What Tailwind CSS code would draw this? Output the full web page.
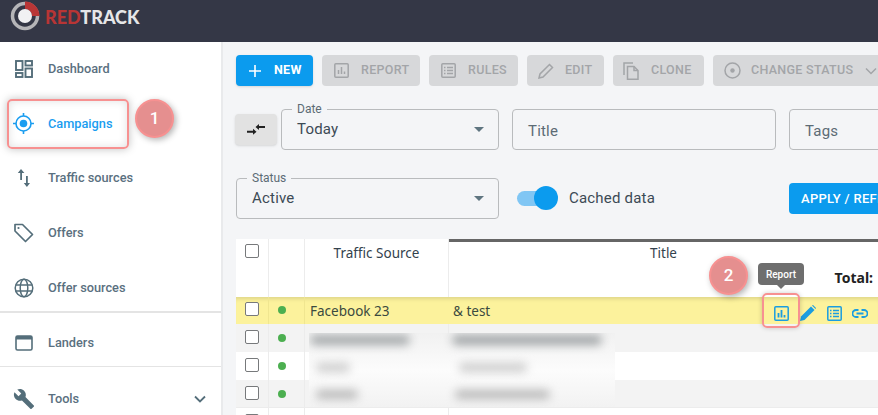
<!DOCTYPE html>
<html lang="en">
<head>
    <meta charset="UTF-8">
    <title>RedTrack Campaigns</title>
    <script src="https://cdn.jsdelivr.net/npm/@tailwindcss/browser@4"></script>
</head>
<body class="bg-[#f4f5f7] font-['Roboto',sans-serif]">
<div class="relative w-[878px] h-[415px] overflow-hidden flex flex-col">
    <!-- top bar -->
    <header class="h-[42px] shrink-0 bg-[#343746] flex items-center pl-[10px] overflow-hidden">
        <svg width="32" height="32" viewBox="0 0 32 32" class="-mt-[11px] shrink-0">
            <circle cx="15" cy="16" r="12.5" fill="none" stroke="#b5b5b8" stroke-width="3.5"/>
            <path d="M15 1.500A14.500 14.500 0 0 1 29.500 16H22A7 7 0 0 0 15 9Z" fill="#b93636"/>
            <circle cx="15" cy="16" r="7" fill="#f1f1f3"/>
        </svg>
        <div class="ml-[3px] -mt-[9px] font-['Lato',sans-serif] font-black text-[18px] leading-none"><span class="text-[#b83535]">RED</span><span class="text-[#e6e6e8]">TRACK</span></div>
    </header>

    <div class="flex flex-1 min-h-0">
        <!-- sidebar -->
        <aside class="w-[223px] shrink-0 bg-white border-r-2 border-[#e9eaec] text-[12.75px] font-medium text-[#5a7080]">
            <div class="h-[54px] pb-[1px] flex items-center pl-[15px] gap-[15px]">
                <svg width="18" height="18" viewBox="0 0 18 18" fill="none" stroke="#546e7a" stroke-width="1.900"><rect x="1" y="1" width="6.500" height="9"/><rect x="10.500" y="1" width="6.500" height="4.500"/><rect x="1" y="13" width="6.500" height="4"/><rect x="10.500" y="8.500" width="6.500" height="8.500"/></svg>
                <span>Dashboard</span>
            </div>
            <div class="h-[55px] flex items-center pl-[13px] gap-[14px] text-[#1a9df0]">
                <svg width="21" height="21" viewBox="0 0 21 21" fill="none" stroke="#1a9df0" stroke-width="1.600"><circle cx="10.500" cy="10.500" r="7.500"/><circle cx="10.500" cy="10.500" r="3.800" fill="#1a9df0" stroke="none"/><path d="M10.500 0v3M10.500 18v3M0 10.500h3M18 10.500h3"/></svg>
                <span>Campaigns</span>
            </div>
            <div class="h-[54px] flex items-center pl-[17px] gap-[17px]">
                <svg width="14" height="18" viewBox="0 0 14 18" fill="#546e7a"><path d="M4 0 7.400 4H5v7H3.200V4H.8ZM9 7h1.800v7H13l-3.100 4L6.800 14H9Z"/></svg>
                <span>Traffic sources</span>
            </div>
            <div class="h-[55px] flex items-center pl-[14px] gap-[14px]">
                <svg width="20" height="20" viewBox="0 0 20 20" fill="none" stroke="#546e7a" stroke-width="1.700"><path d="M1 1.500h7.500l10 10-7 7-10.500-10.500Z" stroke-linejoin="round"/><circle cx="4.500" cy="5" r="1.100" fill="#546e7a" stroke="none"/></svg>
                <span>Offers</span>
            </div>
            <div class="h-[53px] pt-[4px] flex items-center pl-[14px] gap-[14px] border-b-2 border-[#e4e4e4]">
                <svg width="20" height="20" viewBox="0 0 20 20" fill="none" stroke="#546e7a" stroke-width="1.500"><circle cx="10" cy="10" r="8.800"/><ellipse cx="10" cy="10" rx="3.800" ry="8.800"/><path d="M1.800 7h16.400M1.800 13h16.400"/></svg>
                <span>Offer sources</span>
            </div>
            <div class="h-[54px] pt-[6px] flex items-center pl-[15px] gap-[15px] border-b border-[#e4e4e4]">
                <svg width="18" height="16" viewBox="0 0 18 16" fill="none"><rect x="1" y="1" width="16" height="14" rx="1.500" stroke="#546e7a" stroke-width="1.600"/><rect x="1" y="1" width="16" height="3.500" fill="#546e7a"/></svg>
                <span>Landers</span>
            </div>
            <div class="h-[64px] flex items-center pl-[13px] gap-[13px] pr-[15px]">
                <svg width="22" height="22" viewBox="0 0 24 24" fill="#546e7a"><path d="M22.700 19 13.600 9.900c.9-2.300.4-5-1.500-6.900-2-2-5-2.400-7.400-1.300L9 6 6 9 1.600 4.700C.4 7.100.9 10.100 2.900 12.100c1.900 1.900 4.600 2.400 6.900 1.500l9.100 9.100c.4.400 1 .4 1.400 0l2.300-2.300c.5-.4.500-1.100.1-1.400Z"/></svg>
                <span>Tools</span>
                <svg width="12" height="8" viewBox="0 0 12 8" fill="none" stroke="#546e7a" stroke-width="1.800" class="ml-auto"><path d="m1 1.500 5 5 5-5"/></svg>
            </div>
        </aside>

        <!-- main -->
        <main class="flex-1 min-w-0 pl-[13px] pt-[13px] overflow-hidden">
            <!-- toolbar -->
            <div class="flex gap-[9px] h-[31px] w-[800px] text-[12.5px] font-medium tracking-[0.3px] text-[#a3a5a8]">
                <button class="w-[77px] shrink-0 flex items-center pl-[13px] gap-[13px] rounded bg-[#0b9bee] text-white font-bold shadow-sm">
                    <svg width="12" height="12" viewBox="0 0 12 12" stroke="#fff" stroke-width="1.600"><path d="M6 0v12M0 6h12"/></svg>NEW
                </button>
                <button class="w-[98px] shrink-0 flex items-center pl-[12px] gap-[12px] rounded bg-[#d7d8da]">
                    <svg width="15" height="15" viewBox="0 0 15 15" fill="none" stroke="#a3a5a8" stroke-width="1.500"><rect x=".8" y=".8" width="13.400" height="13.400" rx="1"/><path d="M4.500 11V7M7.500 11V4M10.500 11V8.500"/></svg>REPORT
                </button>
                <button class="w-[89px] shrink-0 flex items-center pl-[12px] gap-[12px] rounded bg-[#d7d8da]">
                    <svg width="15" height="15" viewBox="0 0 15 15" fill="none" stroke="#a3a5a8" stroke-width="1.500"><rect x=".8" y=".8" width="13.400" height="13.400" rx="1"/><path d="M3 4.500h1.500M6 4.500h6M3 7.500h1.500M6 7.500h6M3 10.500h1.500M6 10.500h6"/></svg>RULES
                </button>
                <button class="w-[77px] shrink-0 flex items-center pl-[11px] gap-[11px] rounded bg-[#d7d8da]">
                    <svg width="16" height="16" viewBox="0 0 16 16" fill="none" stroke="#a3a5a8" stroke-width="1.500"><path d="M1 15l1-4L11.500 1.500l3 3L5 14Z"/></svg>EDIT
                </button>
                <button class="w-[91px] shrink-0 flex items-center pl-[10px] gap-[11px] rounded bg-[#d7d8da]">
                    <svg width="17" height="18" viewBox="0 0 17 18" fill="none" stroke="#a3a5a8" stroke-width="1.500"><path d="M1 13V1h9"/><path d="M4.500 4.500h6.500l4 4v8.700h-10.500Z"/><path d="M11 4.500v4h4"/></svg>CLONE
                </button>
                <button class="w-[180px] shrink-0 flex items-center pl-[11px] gap-[10px] rounded bg-[#d7d8da] whitespace-nowrap">
                    <svg width="17" height="17" viewBox="0 0 17 17" fill="none" stroke="#a3a5a8" stroke-width="1.500"><circle cx="8.500" cy="8.500" r="7.500"/><circle cx="8.500" cy="8.500" r="2.200" fill="#a3a5a8" stroke="none"/></svg>CHANGE STATUS
                    <svg width="12" height="8" viewBox="0 0 12 8" fill="none" stroke="#a3a5a8" stroke-width="1.500" class="ml-[2px]"><path d="m1 1.500 5 5 5-5"/></svg>
                </button>
            </div>

            <!-- filters row 1 -->
            <div class="flex items-center mt-[23px] w-[800px] h-[41px]">
                <button class="w-[42px] h-[31px] mr-[4px] -ml-[1px] shrink-0 rounded bg-[#e2e2e2] shadow-sm flex items-center justify-center">
                    <svg width="18" height="11" viewBox="0 0 18 11" fill="#222"><path d="M0 6.800h6V4.800L9.500 7.800 6 10.800V8.800H0ZM18 2v2h-6v2L8.500 3 12 0v2Z"/></svg>
                </button>
                <div class="relative w-[218px] h-[41px] shrink-0 rounded border border-[#b9bbbd] flex items-center pl-[15px] text-[15px] text-[#3c4a55]">
                    <span class="absolute -top-[8px] left-[10px] px-[5px] bg-[#f4f5f7] text-[12px] leading-[14px] text-[#5c6b75]">Date</span>
                    <span class="mt-[-1px] tracking-[0.2px]">Today</span>
                    <span class="absolute right-[14px] top-[17px] w-0 h-0 border-x-[5px] border-x-transparent border-t-[5px] border-t-[#5f7580]"></span>
                </div>
                <div class="w-[264px] h-[41px] ml-[13px] shrink-0 rounded border border-[#b9bbbd] flex items-center pl-[15px] pt-[3px] text-[15px] text-[#5c6b75] tracking-[0.2px]">Title</div>
                <div class="w-[120px] h-[41px] ml-[13px] shrink-0 rounded border border-[#b9bbbd] flex items-center pl-[15px] pt-[3px] text-[15px] text-[#5c6b75] tracking-[0.2px]">Tags</div>
            </div>

            <!-- filters row 2 -->
            <div class="flex items-center mt-[28px] w-[800px] h-[41px]">
                <div class="relative w-[263px] h-[41px] shrink-0 rounded border border-[#b9bbbd] flex items-center pl-[15px] text-[15px] text-[#3c4a55]">
                    <span class="absolute -top-[8px] left-[10px] px-[5px] bg-[#f4f5f7] text-[12px] leading-[14px] text-[#5c6b75]">Status</span>
                    <span class="mt-[-1px] tracking-[0.2px]">Active</span>
                    <span class="absolute right-[14px] top-[17px] w-0 h-0 border-x-[5px] border-x-transparent border-t-[5px] border-t-[#5f7580]"></span>
                </div>
                <div class="relative w-[36px] h-[15px] ml-[18px] shrink-0 rounded-full bg-[#80c6f4]">
                    <span class="absolute -right-[5px] -top-[5px] w-[24px] h-[24px] rounded-full bg-[#0b9bee]"></span>
                </div>
                <span class="ml-[16px] w-[87px] shrink-0 text-[15px] text-[#3c4a55] tracking-[0.2px] whitespace-nowrap">Cached data</span>
                <button class="ml-[133px] w-[110px] h-[31px] shrink-0 rounded bg-[#0b9bee] text-white text-[13px] font-medium tracking-[0.3px] text-left pl-[12px] whitespace-nowrap">APPLY / REFRESH</button>
            </div>

            <!-- table -->
            <div class="mt-[20px] w-[642px] font-['Noto_Sans',sans-serif] text-[13.5px] text-[#33424d] bg-white">
                <div class="flex h-[58px] bg-white">
                    <div class="w-[33px] shrink-0 border-r border-[#ececec] pl-[9px] pt-[5px]"><span class="block w-[14px] h-[14px] rounded-[2px] border-[1.500px] border-[#77797b] bg-white"></span></div>
                    <div class="w-[36px] shrink-0 border-r border-[#ececec]"></div>
                    <div class="w-[144px] shrink-0 border-r border-[#ececec] text-center pt-[4px]">Traffic Source</div>
                    <div class="relative flex-1 border-t-[3px] border-[#666666] text-center pt-[1px]">
                        Title
                        <span class="absolute right-[5px] top-[25px] font-bold text-[14px] text-[#222]">Total:</span>
                    </div>
                </div>
                <div class="flex h-[27px] items-center bg-[#fcf29c] shadow-[inset_0_5px_4px_-3px_rgba(0,0,0,0.12)]">
                    <div class="w-[33px] h-full shrink-0 pl-[9px] pt-[5px] border-r border-[#f0e690]"><span class="block w-[14px] h-[14px] rounded-[2px] border-[1.500px] border-[#77797b] bg-white"></span></div>
                    <div class="w-[36px] h-full shrink-0 pl-[9px] pt-[9px] border-r border-[#f0e690]"><span class="block w-[8px] h-[8px] rounded-full bg-[#4caf50]"></span></div>
                    <div class="w-[144px] shrink-0 pl-[5px] pt-[1px] text-[#3b4a3f]">Facebook 23</div>
                    <div class="flex-1 flex items-center pl-[4px] text-[#3b4a3f]">
                        <span class="pt-[1px]">&amp; test</span>
                        <div class="ml-auto mt-[5px] flex items-center gap-[11px] pr-[10px]">
                            <svg width="15" height="15" viewBox="0 0 15 15" fill="none" stroke="#1a9de0" stroke-width="1.500"><rect x=".8" y=".8" width="13.400" height="13.400" rx="1"/><path d="M4.500 11.500V7M7.500 11.500V4M10.500 11.500V9" stroke-width="1.800"/></svg>
                            <svg width="16" height="16" viewBox="0 0 16 16" fill="#1a9de0"><path d="M0 16l1-4.500L11 1.500l3.500 3.500L4.500 15Z"/><path d="M12 .5l1-.5 3 3-.5 1Z"/></svg>
                            <svg width="15" height="15" viewBox="0 0 15 15" fill="none" stroke="#1a9de0" stroke-width="1.500"><rect x=".8" y=".8" width="13.400" height="13.400" rx="1"/><path d="M3 4.500h1.500M6 4.500h6M3 7.500h1.500M6 7.500h6M3 10.500h1.500M6 10.500h6"/></svg>
                            <svg width="16" height="9" viewBox="0 0 16 9" fill="none" stroke="#1a9de0" stroke-width="1.800" class="-ml-[1px]"><path d="M6.500 1H4a3.500 3.500 0 0 0 0 7h2.500M9.500 1H12a3.500 3.500 0 0 1 0 7H9.500M4.500 4.500h7"/></svg>
                        </div>
                    </div>
                </div>
                <div class="flex h-[28px] bg-[#f3f3f3]">
                    <div class="w-[33px] shrink-0 pl-[9px] pt-[6px] border-r border-[#ececec]"><span class="block w-[14px] h-[14px] rounded-[2px] border-[1.500px] border-[#77797b] bg-white"></span></div>
                    <div class="w-[36px] shrink-0 pl-[9px] pt-[10px] border-r border-[#ececec]"><span class="block w-[8px] h-[8px] rounded-full bg-[#4caf50]"></span></div>
                    <div class="w-[144px] shrink-0 border-r border-[#ececec]"></div>
                </div>
                <div class="flex h-[28px] bg-white">
                    <div class="w-[33px] shrink-0 pl-[9px] pt-[6px] border-r border-[#ececec]"><span class="block w-[14px] h-[14px] rounded-[2px] border-[1.500px] border-[#77797b] bg-white"></span></div>
                    <div class="w-[36px] shrink-0 pl-[9px] pt-[10px] border-r border-[#ececec]"><span class="block w-[8px] h-[8px] rounded-full bg-[#4caf50]"></span></div>
                    <div class="w-[144px] shrink-0 border-r border-[#ececec]"></div>
                </div>
                <div class="flex h-[28px] bg-[#f3f3f3] border-b border-[#ececec]">
                    <div class="w-[33px] shrink-0 pl-[9px] pt-[6px] border-r border-[#ececec]"><span class="block w-[14px] h-[14px] rounded-[2px] border-[1.500px] border-[#77797b] bg-white"></span></div>
                    <div class="w-[36px] shrink-0 pl-[9px] pt-[10px] border-r border-[#ececec]"><span class="block w-[8px] h-[8px] rounded-full bg-[#4caf50]"></span></div>
                    <div class="w-[144px] shrink-0 border-r border-[#ececec]"></div>
                </div>
                <div class="flex h-[28px] bg-white">
                    <div class="w-[33px] shrink-0 pl-[9px] pt-[6px] border-r border-[#ececec]"><span class="block w-[14px] h-[14px] rounded-[2px] border-[1.500px] border-[#77797b] bg-white"></span></div>
                    <div class="w-[36px] shrink-0 border-r border-[#ececec]"></div>
                    <div class="w-[144px] shrink-0 border-r border-[#ececec]"></div>
                </div>
            </div>
        </main>
    </div>

    <!-- blurred rows overlay -->
    <div class="absolute left-[309px] top-[333px] w-[306px] h-[74px] overflow-hidden bg-linear-to-b from-[#f1f1f1] via-[#fcfcfc] to-[#f2f2f2]">
        <div class="absolute left-[1px] top-[2px] w-[100px] h-[10px] rounded-full bg-[#a4a8aa] blur-[5px]"></div>
        <div class="absolute left-[143px] top-[2px] w-[150px] h-[10px] rounded-full bg-[#a0a4a6] blur-[5px]"></div>
        <div class="absolute left-[7px] top-[30px] w-[34px] h-[9px] rounded-full bg-[#cccccc] blur-[5px]"></div>
        <div class="absolute left-[150px] top-[30px] w-[68px] h-[9px] rounded-full bg-[#cccccc] blur-[5px]"></div>
        <div class="absolute left-[7px] top-[57px] w-[42px] h-[9px] rounded-full bg-[#b8b8b8] blur-[5px]"></div>
        <div class="absolute left-[146px] top-[57px] w-[95px] h-[9px] rounded-full bg-[#b8b8b8] blur-[5px]"></div>
    </div>

    <!-- annotation 1 -->
    <div class="absolute left-[7px] top-[99px] w-[122px] h-[50px] rounded-[5px] border-2 border-[#f79191] shadow-[0_0_8px_rgba(0,0,0,0.25),inset_0_0_8px_rgba(0,0,0,0.12)]"></div>
    <div class="absolute left-[135px] top-[99px] w-[39px] h-[39px] rounded-full bg-[#e58f8f] border-2 border-[#f79191] shadow-[2px_2px_6px_rgba(0,0,0,0.3)] flex items-center justify-center text-white text-[17px] font-medium">1</div>

    <!-- annotation 2 -->
    <div class="absolute left-[709px] top-[256px] w-[39px] h-[39px] rounded-full bg-[#e58f8f] border-2 border-[#f79191] shadow-[2px_2px_6px_rgba(0,0,0,0.3)] flex items-center justify-center text-white text-[17px] font-medium">2</div>
    <div class="absolute left-[762px] top-[293px] w-[38px] h-[35px] rounded-[5px] border-2 border-[#f79191] shadow-[0_0_5px_rgba(0,0,0,0.2)]"></div>
    <div class="absolute left-[758px] top-[263px] w-[46px] h-[22px] rounded-[4px] bg-[#6e6e6e] flex items-center justify-center text-white text-[10px] font-medium">Report</div>
    <div class="absolute left-[777px] top-[285px] w-0 h-0 border-x-[4px] border-x-transparent border-t-[4px] border-t-[#6e6e6e]"></div>
</div>
</body>
</html>
